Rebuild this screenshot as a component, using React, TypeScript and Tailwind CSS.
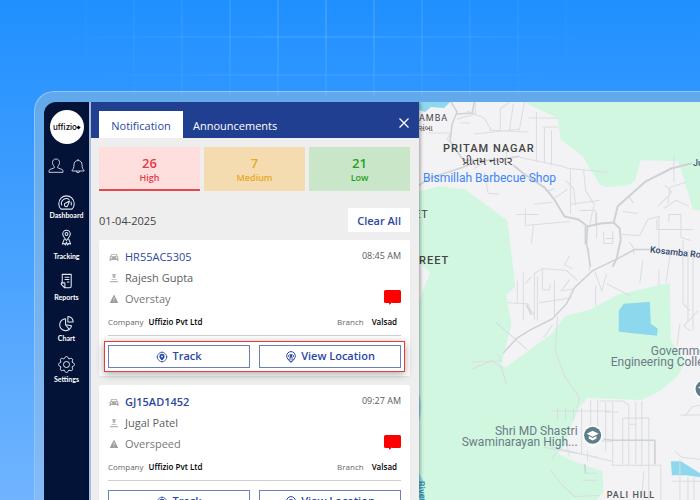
import type { ReactNode } from 'react'

interface Alert {
  plate: string
  driver: string
  event: string
  time: string
  unread: boolean
  highlighted: boolean
}

const alerts: Alert[] = [
  { plate: 'HR55AC5305', driver: 'Rajesh Gupta', event: 'Overstay', time: '08:45 AM', unread: false, highlighted: true },
  { plate: 'GJ15AD1452', driver: 'Jugal Patel', event: 'Overspeed', time: '09:27 AM', unread: true, highlighted: false },
]

const levels = [
  { count: 26, label: 'High', style: 'bg-[#ffdfde] text-[#e63946] border-[#e5484f]' },
  { count: 7, label: 'Medium', style: 'bg-[#f5dcb0] text-[#e8a823] border-transparent' },
  { count: 21, label: 'Low', style: 'bg-[#cae6c8] text-[#1fa01f] border-transparent' },
]

const navItems: { label: string; icon: ReactNode; gap: string }[] = [
  {
    label: 'Dashboard',
    gap: 'gap-0',
    icon: (
      <>
        <path d="M3.2 16a8.200 8.200 0 1 1 11.600 0z" />
        <path d="M4 12a5.200 5.200 0 0 1 8-6M13.600 8.200a5.200 5.200 0 0 1 .4 3.800" />
        <path d="M12.200 7.500 10.500 11.800a1.900 1.900 0 1 1-2.300-2.200z" />
      </>
    ),
  },
  {
    label: 'Tracking',
    gap: 'gap-1.5',
    icon: (
      <>
        <path d="M9 12.200C7 9.500 5 8 5 5.400a4 4 0 0 1 8 0C13 8 11 9.500 9 12.200z" />
        <circle cx="9" cy="5.300" r="1.500" />
        <path d="M6.800 10.500 4.600 16l2.200-.7 1 1.700L9 14l1.200 3 1-1.700 2.200.7-2.200-5.500" />
      </>
    ),
  },
  {
    label: 'Reports',
    gap: 'gap-1',
    icon: (
      <>
        <path d="M4.500 11.500V2.500H14V15a1.700 1.700 0 0 1-1.700 1.700H7L3.500 13V11.500H6.500a.8.800 0 0 1 .8.800V16.500" />
        <path d="M7 5.500h5M7 8h5M9.500 10.500H12" />
      </>
    ),
  },
  {
    label: 'Chart',
    gap: 'gap-0.5',
    icon: (
      <>
        <path d="M8 4a6.300 6.300 0 1 0 6.300 7.500L8 10.300z" />
        <path d="M10.500 1.500v6H16a5.600 5.600 0 0 0-5.500-6zM8 10.300l4 5" />
      </>
    ),
  },
  {
    label: 'Settings',
    gap: 'gap-0.5',
    icon: (
      <g transform="translate(-2.4 -2.4) scale(.95)">
        <path d="M10.325 4.317c.426-1.756 2.924-1.756 3.350 0a1.724 1.724 0 0 0 2.573 1.066c1.543-.940 3.310.826 2.370 2.370a1.724 1.724 0 0 0 1.065 2.572c1.756.426 1.756 2.924 0 3.350a1.724 1.724 0 0 0-1.066 2.573c.940 1.543-.826 3.310-2.370 2.370a1.724 1.724 0 0 0-2.572 1.065c-.426 1.756-2.924 1.756-3.350 0a1.724 1.724 0 0 0-2.573-1.066c-1.543.940-3.310-.826-2.370-2.370a1.724 1.724 0 0 0-1.065-2.572c-1.756-.426-1.756-2.924 0-3.350a1.724 1.724 0 0 0 1.066-2.573c-.940-1.543.826-3.310 2.370-2.370.996.608 2.296.070 2.572-1.065z" />
        <circle cx="12" cy="12" r="3.400" />
      </g>
    ),
  },
]

function Sidebar() {
  return (
    <nav className="flex w-[45px] shrink-0 flex-col items-center bg-[#031338] text-white">
      <div className="mt-2 flex size-[34px] shrink-0 items-center justify-center rounded-full bg-white font-[Inter,sans-serif] text-[8px] font-medium text-black">
        uffizio
        <span className="size-[3px] rotate-45 bg-black" />
      </div>
      <div className="mt-3.5 flex items-center gap-1.5 pl-px">
        <button type="button" aria-label="Profile">
          <svg viewBox="0 0 16 16" className="size-4 fill-none stroke-[#c3cbe0] stroke-1">
            <path d="M8 1C5.700 1 4.400 2.600 4.500 4.600c.1 1.700.8 3.100 1.800 4v1.200L2 11.500c-.8.400-1 1.200-1 2.800h14c0-1.600-.2-2.400-1-2.800L9.700 9.800V8.600c1-.9 1.700-2.300 1.800-4C11.600 2.600 10.300 1 8 1z" />
          </svg>
        </button>
        <button type="button" aria-label="Alerts">
          <svg viewBox="0 0 16 16" className="size-4 fill-none stroke-[#c3cbe0] stroke-1">
            <path d="M8 2.500c-2.500 0-4 1.800-4 4.300 0 3-.8 4.300-2 5.500v.7h12v-.7c-1.200-1.200-2-2.500-2-5.500 0-2.500-1.500-4.300-4-4.300zM8 2.500V1M6.300 13a1.700 1.700 0 0 0 3.400 0" />
          </svg>
        </button>
      </div>
      <ul className="mt-[5px] flex flex-col">
        {navItems.map(item => (
          <li key={item.label}>
            <a href="#" className={`flex h-[41px] flex-col items-center justify-end ${item.gap}`}>
              <svg viewBox="0 0 18 18" className="size-[17px] fill-none stroke-[#e4e8f2] stroke-[1.1]" strokeLinejoin="round">
                {item.icon}
              </svg>
              <span className="font-[Lato,sans-serif] text-[7px] leading-[9px] font-bold">{item.label}</span>
            </a>
          </li>
        ))}
      </ul>
    </nav>
  )
}

function AlertCard({ alert }: { alert: Alert }) {
  return (
    <article className="rounded-[2px] bg-white px-[9px] pt-1.5 pb-1 shadow-xs">
      <div className="flex justify-between">
        <div className="flex flex-col text-[11px] leading-[21px]">
          <div className="flex items-center gap-[5px]">
            <svg viewBox="0 0 12 12" className="size-3 fill-[#a8a8a8]">
              <path fillRule="evenodd" d="M3.300 3h5.400l.8 2.200.9.800v4H9.300V9H2.700v1H1.600V6l.9-.8zM3.900 3.800 3.400 5.200h5.200l-.5-1.400zM2.600 6.300v1.100h1.500V6.300zM7.900 6.300v1.100h1.500V6.300z" />
            </svg>
            <a href="#" className={`text-[#2b48a0] ${alert.unread ? 'font-semibold' : 'font-medium'}`}>{alert.plate}</a>
          </div>
          <div className="flex items-center gap-[5px] font-medium text-[#606060]">
            <svg viewBox="0 0 12 12" className="size-3 fill-[#b5b5b5]">
              <path d="M4.200 2h3.600v.8l-.4.4v1.600a1.400 1.400 0 0 1-2.800 0V3.200l-.4-.4zM3.500 7h5v.8h-5zM2 9h8v1.200H2z" />
            </svg>
            {alert.driver}
          </div>
          <div className="flex items-center gap-[5px] text-[#777]">
            <svg viewBox="0 0 12 12" className="size-3">
              <path d="M6 1.500 10.200 10H1.800z" fill="#9a9a9a" />
              <path d="M6 4.500v3M6 8.300v1" stroke="#ddd" strokeWidth="1" />
            </svg>
            {alert.event}
          </div>
        </div>
        <div className="flex flex-col items-end justify-between">
          <time className="text-[9px] leading-[19px] text-[#5a5a5a]">{alert.time}</time>
          <svg viewBox="0 0 17 15" className="mb-1 h-[15px] w-[17px] fill-[#fd0000]">
            <path d="M1.500 0h14A1.500 1.500 0 0 1 17 1.500v10a1.500 1.500 0 0 1-1.500 1.500H8.500L7.800 12.500 5.500 15l-.5-2H1.500A1.500 1.500 0 0 1 0 11.500v-10A1.500 1.500 0 0 1 1.500 0z" />
          </svg>
        </div>
      </div>
      <dl className="mt-1 flex justify-between pr-1 text-[8px] leading-[18px]">
        <div className="flex gap-[5px]">
          <dt className="text-[#666]">Company</dt>
          <dd className="font-semibold text-black">Uffizio Pvt Ltd</dd>
        </div>
        <div className="flex gap-2">
          <dt className="text-[#666]">Branch</dt>
          <dd className="font-semibold text-black">Valsad</dd>
        </div>
      </dl>
      <hr className="mt-1 border-[#d0d0d0]" />
      <div className={`-mx-1 mt-[5px] flex gap-[9px] border p-[3px] ${alert.highlighted ? 'border-[#e8393b] shadow-[0_2px_8px_rgba(0,0,0,0.35)]' : 'border-transparent'}`}>
        <button type="button" className="flex h-[23px] flex-1 items-center justify-center gap-1 border border-[#6a7fbd] bg-white text-[11px] font-semibold text-[#2b48a0]">
          <svg viewBox="0 0 12 12" className="size-3 fill-none stroke-[#2b48a0]">
            <circle cx="6" cy="6" r="4.700" strokeWidth=".8" />
            <path d="M6 .5v1.200M6 10.300v1.200M.5 6h1.200M10.300 6h1.200" strokeWidth=".9" />
            <path fill="#2b48a0" stroke="none" fillRule="evenodd" d="M6 2.800a2.600 2.600 0 0 0-2.600 2.600C3.400 7.100 6 9.400 6 9.400s2.600-2.300 2.600-4A2.600 2.600 0 0 0 6 2.800zm0 1.700a.9.900 0 1 1 0 1.800.9.900 0 0 1 0-1.800z" />
          </svg>
          Track
        </button>
        <button type="button" className="flex h-[23px] flex-1 items-center justify-center gap-1 border border-[#6a7fbd] bg-white text-[11px] font-semibold text-[#2b48a0]">
          <svg viewBox="0 0 12 12" className="size-3 fill-none stroke-[#2b48a0]">
            <path d="M6 11.500C3.500 9 1.700 7.200 1.700 4.900a4.300 4.300 0 0 1 8.600 0C10.300 7.200 8.500 9 6 11.500z" />
            <path d="M3 5Q6 1.800 9 5 6 8.200 3 5zM3.600 8h4.800L6 11z" strokeWidth=".8" />
            <circle cx="6" cy="5" r="1.200" fill="#2b48a0" stroke="none" />
          </svg>
          View Location
        </button>
      </div>
    </article>
  )
}

function NotificationPanel() {
  return (
    <section className="z-10 flex w-[330px] shrink-0 flex-col border-l-2 border-[#a8bcdf] bg-[#eee] shadow-[1px_0_4px_rgba(0,0,0,0.4)]">
      <header className="flex h-9 shrink-0 items-end bg-[#213f91] px-2 text-[11px]">
        <div role="tablist" className="flex">
          <button type="button" role="tab" aria-selected="true" className="h-[27px] w-[84px] bg-white pt-1 font-medium text-[#2b48a0]">Notification</button>
          <button type="button" role="tab" aria-selected="false" className="h-[27px] px-2.5 pt-1 text-white">Announcements</button>
        </div>
        <button type="button" aria-label="Close" className="mb-2.5 ml-auto">
          <svg viewBox="0 0 14 10" className="h-2.5 w-3.5 stroke-white stroke-[1.3]">
            <path d="M2.500.5l9 9M11.500.5l-9 9" />
          </svg>
        </button>
      </header>
      <div className="flex flex-col pt-[9px] pr-[9px] pl-2">
        <div className="grid grid-cols-3 gap-1">
          {levels.map(level => (
            <button key={level.label} type="button" className={`flex h-[44px] flex-col items-center justify-center border-b-2 pt-1 ${level.style}`}>
              <span className="text-[13px] leading-[15px] font-semibold">{level.count}</span>
              <span className="text-[9px] leading-[13px] font-semibold">{level.label}</span>
            </button>
          ))}
        </div>
        <div className="mt-[17px] flex items-center justify-between">
          <span className="pt-0.5 text-[11px] font-medium text-[#444]">01-04-2025</span>
          <button type="button" className="h-6 bg-white px-[9px] pt-0.5 text-[11px] font-semibold text-[#2b48a0]">Clear All</button>
        </div>
        <div className="mt-2 flex flex-col gap-[9px]">
          {alerts.map(alert => <AlertCard key={alert.plate} alert={alert} />)}
        </div>
      </div>
    </section>
  )
}

function SchoolPin({ x, y }: { x: number; y: number }) {
  return (
    <g transform={`translate(${x} ${y})`}>
      <path d="M0 13C-3 10-10 7-10 0a10 10 0 0 1 20 0C10 7 3 10 0 13z" fill="#fff" />
      <circle r="8.500" fill="#607d8b" />
      <path d="M0-4.500 6-1.500 0 1.500-6-1.500zM-3.800.8V3.200L0 5.200l3.800-2V.8L0 2.800z" fill="#fff" />
    </g>
  )
}

function MapView() {
  return (
    <div className="min-w-0 flex-1 bg-[#f3f2f4]">
      <svg viewBox="420 102 280 398" preserveAspectRatio="xMinYMin slice" className="h-full w-full" role="img" aria-label="Map">
        <g fill="#d2f7e1">
          <path d="M524 102 558 118 561 139 583 156 600 184 606 187 628 185 635 181 641 160 678 161 682 172 693 209 700 210V102z" />
          <path d="M420 191 440 186 466 189 508 220 511 243 516 286 507 294 512 324 502 364 507 366 540 342 552 333 566 315 590 309 618 294 670 282 671 340 686 360 678 375 660 390 642 399 588 397 580 406 572 424 565 445 558 452 574 460 603 470 604 490 596 500H420V300L431 272 420 261z" />
        </g>
        <g fill="#8ed8ee">
          <path d="M420 102h31l-6 6-13-1-6 5-6-2z" />
          <path d="M624 303 650 301 651 323 658 328 657 335 619 331 619 310z" />
          <path d="M671 460 681 460 700 472V476L686 474 672 474z" />
          <path d="M420 392q4 14 0 28zM420 472l4 7-2 8 4 13h-6z" />
        </g>
        <g fill="none" stroke="#dadde0" strokeWidth="1">
          <path d="M458 119 476 114V102M461 123 471 123M492 130 485 118 468 111M501 130V109l9-7M510 131l4-27M520 130l5-28M490 130 528 132M529 118h30M537 112v50M543 127h15M545 127v36M552 130v35M507 146V160M475 134 520 129M430 133H452L448 139 455 146" />
          <path d="M520 157 563 166 568 168 608 172M571 169V214M485 172 489 193 500 194M475 168 492 158M576 205 574 188 566 180M548 191 555 188M535 204 552 202M556 197 568 189M584 170 586 190 595 205M571 204 600 200M594 206 590 225M517 214H539M526 208V225L570 221M534 225 532 243M580 210H596V225M597 212V238M623 211 638 213M629 196 634 203M648 219 640 235 622 234M648 219 659 216V254M681 222V237L691 240M657 219V229H693M669 222V214H681V226M674 182V155M665 185 672 192 658 206M664 208 676 200 689 206M668 203 670 187 686 182M604 231V243H613V231M606 238H614M630 242 634 248V254" />
          <path d="M589 248 590 270M595 270 602 290 607 273M570 255 565 264 573 268M543 268 567 270 578 280M535 319V273L543 268V289H550L551 283M532 276 526 283M538 276V320M555 280V315M570 279 562 290 575 288M524 272V320M518 280V303M607 283 630 295M596 285V305M683 240V303L690 310M693 250V330M688 250V320M671 250 666 282M640 282 643 260M659 270V285" />
          <path d="M558 316 556 350 565 375 580 397 577 407M553 324 544 337M472 361 502 360 498 352M473 368 492 360 502 366 507 383M528 349 510 333 496 321M508 302 528 303 535 315M540 302 572 297M677 345 680 323M690 330 684 325 698 310M685 415 692 406 700 404M680 414H700M675 450 682 456 700 458M680 458V500M672 480H700M688 476V500M694 476V500" />
          <path d="M553 410H610M558 407V419M566 407V419M574 407V419M582 407V453M591 399V442M598 399V439M606 401V450M613 401V464M600 400H623L629 404V465M636 401V463M642 400V465M623 417H649V465M623 417V463M629 423H636M605 411H619M550 445 612 460M544 446 598 456M567 442 570 455M558 451 552 458M588 439 612 440M588 450V460M612 464H661V480M655 440V463M661 478V500M586 463V472H598M583 479H598M551 469 563 484 575 495 600 494M644 470 642 495M649 465V500" />
        </g>
        <g fill="none" stroke="#cdd2d7" strokeWidth="2" strokeLinejoin="round">
          <path d="M452 102 458 112 453 124 451 141 464 160 497 160 520 156M458 114 473 113 475 102M420 185 430 178 464 167 475 162" strokeWidth="1.500" />
          <path d="M514 165 525 174 545 187 554 198 565 216 579 219 588 226 601 223 614 222 620 228 621 239 617 258 613 266M614 222 618 206 646 181 672 168 692 163M586 226V244" />
          <path d="M650 249H635L618 258 593 270 575 287 567 303 553 318 531 329 518 337 504 352M588 226 587 243 591 266M527 304 532 314M612 439H655V463M604 438 613 439M585 463 586 472" strokeWidth="1.500" />
        </g>
        <SchoolPin x={593} y={434} />
        <SchoolPin x={704} y={388} />
        <g fontFamily="Roboto, sans-serif" fill="#444">
          <text x="420" y="121" fontSize="9" letterSpacing="1">AMBA</text>
          <text x="420" y="131" fontSize="8" fontFamily="'Noto Sans Gujarati', 'Noto Sans', sans-serif">સંબા</text>
          <text x="444" y="152" fontSize="11" fontWeight="500" letterSpacing="1">PRITAM NAGAR</text>
          <text x="463" y="165" fontSize="12" fontFamily="'Noto Sans Gujarati', 'Noto Sans', sans-serif">પ્રીતમ નાગર</text>
          <text x="424" y="182" fontSize="12" fill="#3e86f5">Bismillah Barbecue Shop</text>
          <text x="415" y="218" fontSize="11" letterSpacing="1">ET</text>
          <text x="420" y="263" fontSize="11" fontWeight="500" letterSpacing="1">REET</text>
          <text x="693" y="166" fontSize="9" fontWeight="500" fill="#41587c">Ju</text>
          <text x="650" y="252" fontSize="9" fontWeight="500" fill="#2c446d" transform="rotate(6 650 252)">Kosamba Road</text>
          <text x="607" y="497" fontSize="9" fontWeight="500" letterSpacing="1" fill="#555">PALI HILL</text>
          <g fontSize="12" fill="#6b7b86">
            <text x="651" y="354">Government</text>
            <text x="611" y="365">Engineering College</text>
            <text x="578" y="434" textAnchor="end">Shri MD Shastri</text>
            <text x="578" y="445" textAnchor="end">Swaminarayan High...</text>
          </g>
          <text x="419" y="480" fontSize="9" fontWeight="700" fill="#3999ad" transform="rotate(84 419 480)">River</text>
        </g>
      </svg>
    </div>
  )
}

export default function App() {
  return (
    <div className="relative flex h-screen overflow-hidden bg-linear-to-b from-[#1e90ff] via-[#46a1ff] to-[#70b4ff] font-['Open_Sans',sans-serif]">
      <main className="mt-[91px] ml-[34px] flex min-w-0 flex-1 rounded-tl-[20px] border-t border-l border-[#8fc6ff] bg-linear-to-b from-[#62a9ec] to-[#85baf5] pt-2.5 pl-[9px]">
        <div className="flex min-w-0 flex-1 overflow-hidden rounded-tl-xl">
          <Sidebar />
          <NotificationPanel />
          <MapView />
        </div>
      </main>
      {/* Faint backdrop grid */}
      <div className="pointer-events-none absolute inset-x-0 top-0 h-24 bg-[linear-gradient(90deg,rgba(255,255,255,0.13)_2px,transparent_2px),linear-gradient(rgba(255,255,255,0.1)_2px,transparent_2px)] mask-[radial-gradient(280px_130px_at_326px_20px,black,transparent)] bg-size-[48px_38px] bg-position-[37px_36px]" />
    </div>
  )
}
